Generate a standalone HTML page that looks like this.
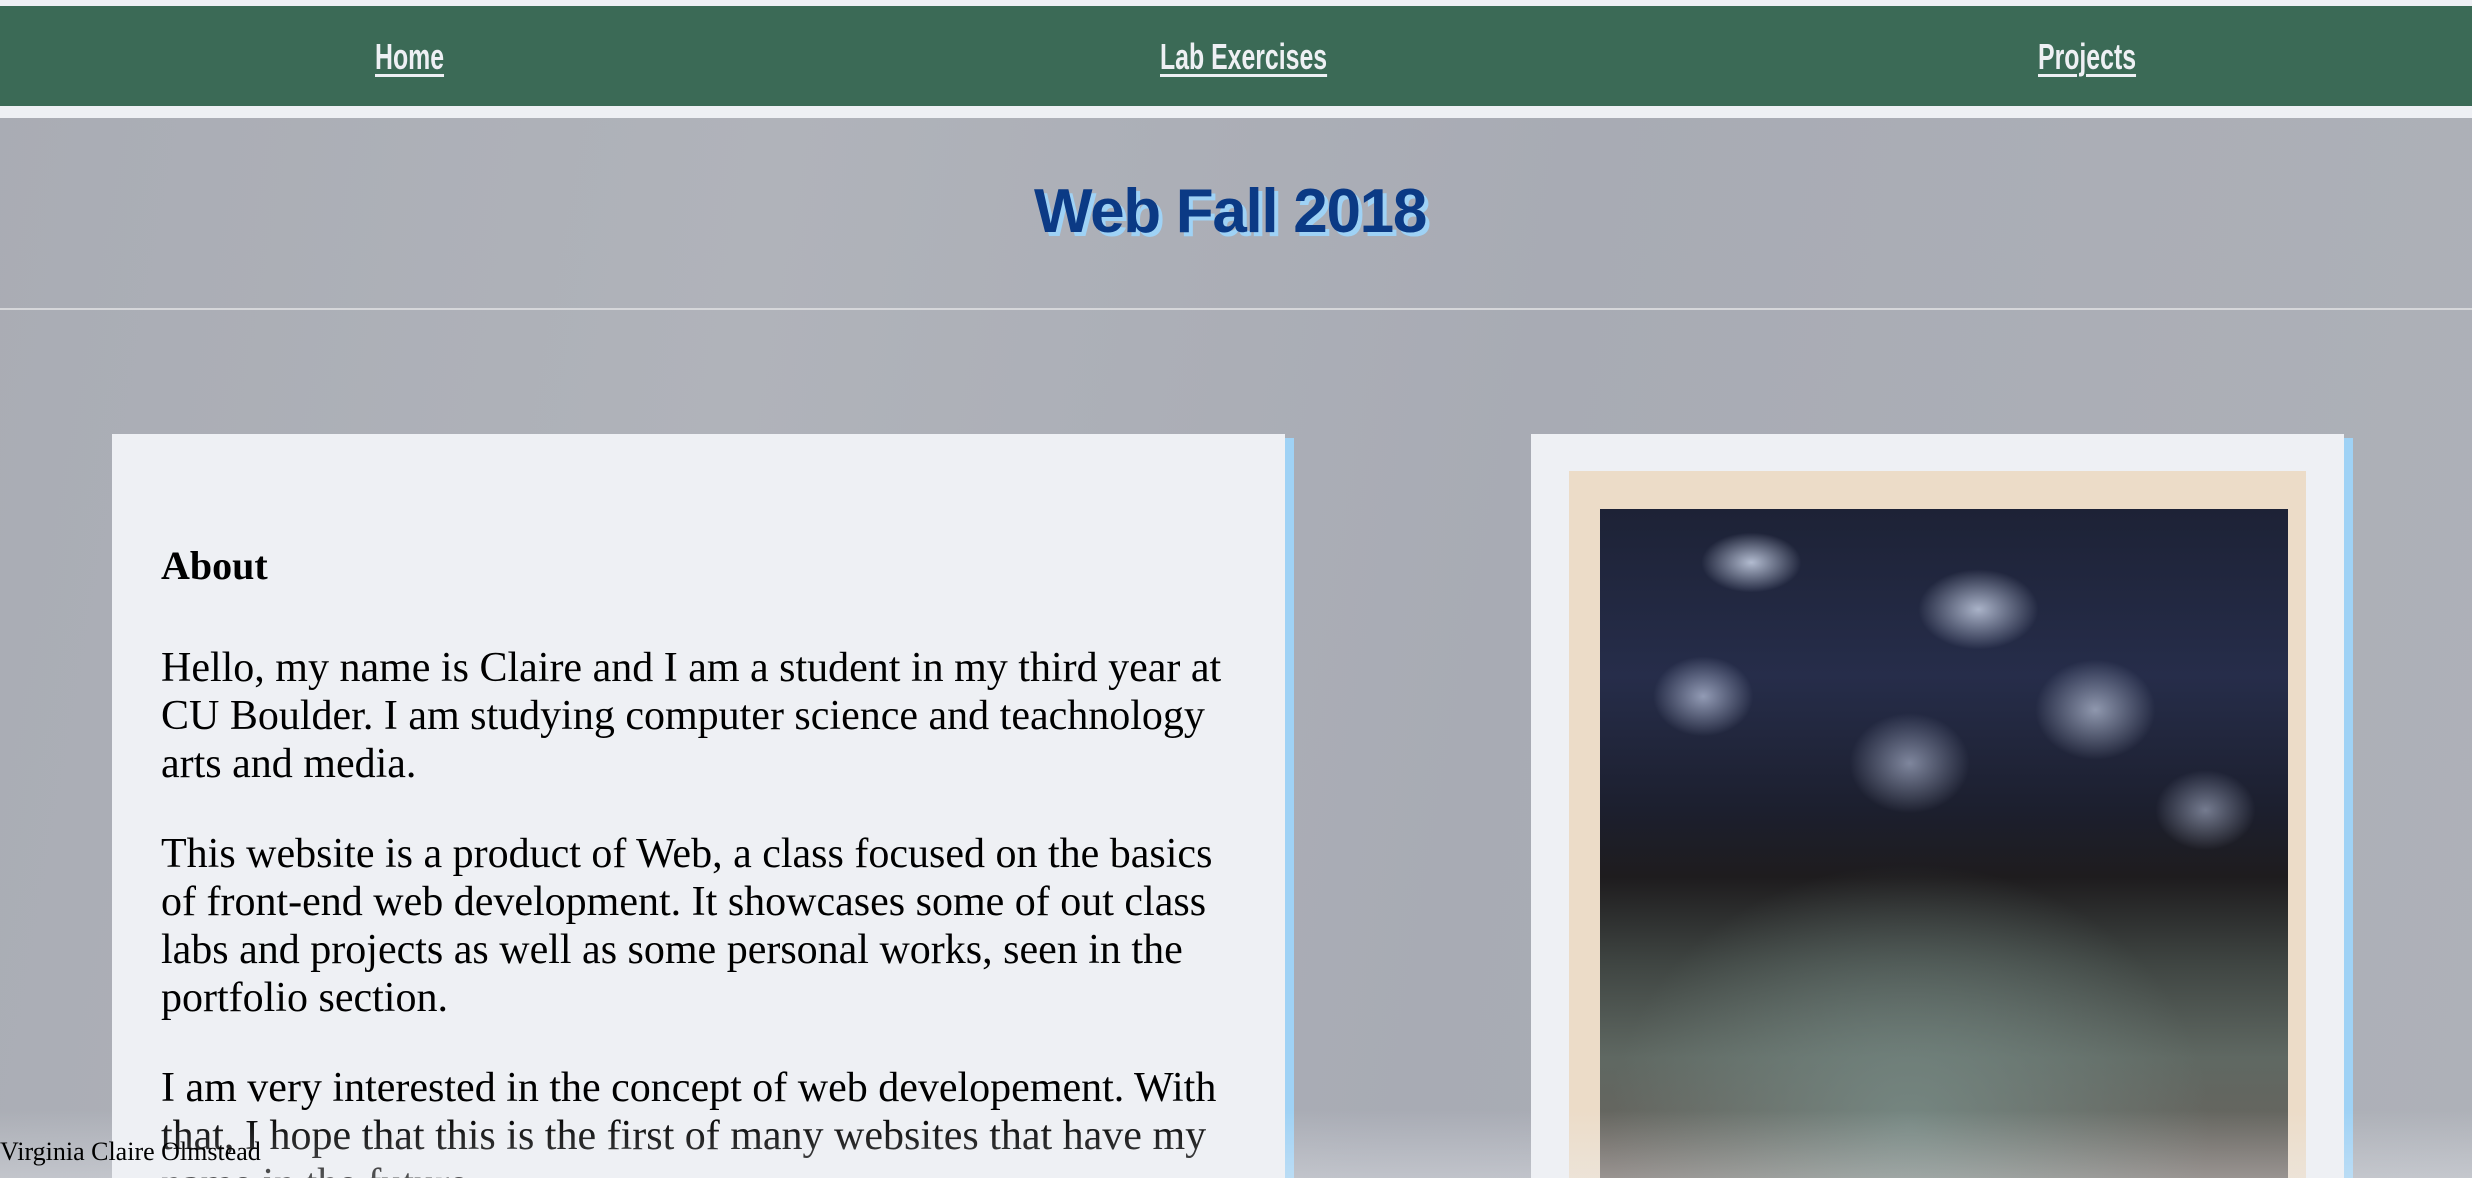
<!DOCTYPE html>
<html><head><meta charset="utf-8">
<style>
html,body{margin:0;padding:0;width:2472px;height:1178px;overflow:hidden;}
body{position:relative;
background:linear-gradient(100deg,#a9acb4 0%,#b0b3ba 30%,#a8abb4 60%,#aeb1b8 100%);
font-family:"Liberation Serif",serif;}
.top{position:absolute;left:0;top:0;width:2472px;height:118px;background:#eef0f4;}
.nav{position:absolute;left:0;top:6px;width:2472px;height:100px;background:#3b6a56;}
.nav a{position:absolute;top:30px;color:#eef0f4;font-family:"Liberation Sans Narrow","Liberation Sans",sans-serif;font-weight:bold;font-size:36px;text-decoration:underline;text-decoration-thickness:3px;text-underline-offset:5px;display:inline-block;transform:scaleX(0.69);transform-origin:left top;white-space:nowrap;}
h1{position:absolute;left:-6px;width:2472px;top:176px;margin:0;text-align:center;font-family:"Liberation Sans",sans-serif;font-weight:bold;font-size:62px;color:#0b3a85;text-shadow:4px 4px 0 #9fd2f5;letter-spacing:-1.3px;}
.hr{position:absolute;left:0;top:308px;width:2472px;height:2px;background:#d6d7da;}
.card{position:absolute;top:434px;height:744px;background:#eef0f4;}
.bar{position:absolute;top:438px;height:740px;width:9px;background:#9fd2f5;}
.txt{position:absolute;left:161px;top:0;width:1072px;color:#000;}
.txt h2{position:absolute;top:108px;margin:0;font-size:40px;font-weight:bold;}
.txt p{position:absolute;margin:0;font-size:42px;line-height:48px;width:1072px;}
.photo{position:absolute;left:1569px;top:471px;width:737px;height:707px;background:#ecdcc8;}
.img{position:absolute;left:1600px;top:509px;width:688px;height:669px;
background:
radial-gradient(ellipse 50px 30px at 22% 8%,rgba(215,225,245,.8),transparent),
radial-gradient(ellipse 60px 40px at 55% 15%,rgba(215,225,245,.75),transparent),
radial-gradient(ellipse 60px 50px at 72% 30%,rgba(215,225,245,.6),transparent),
radial-gradient(ellipse 50px 40px at 15% 28%,rgba(205,215,240,.65),transparent),
radial-gradient(ellipse 60px 50px at 45% 38%,rgba(205,215,240,.55),transparent),
radial-gradient(ellipse 50px 40px at 88% 45%,rgba(205,215,240,.5),transparent),
radial-gradient(ellipse 300px 260px at 45% 92%,rgba(120,140,135,.85),transparent),
linear-gradient(180deg,#1d2236 0%,#262d4a 25%,#1c1f2e 45%,#1e1c1e 55%,#3f4542 68%,#5f6862 82%,#6b625c 100%);}
.fade{position:absolute;left:0;top:1110px;width:2472px;height:68px;background:linear-gradient(180deg,rgba(238,240,244,0),rgba(238,240,244,.35));}
.foot{position:absolute;left:0;top:1137px;font-size:26px;color:#000;}
</style></head><body>
<div class="top"></div>
<div class="nav">
<a style="left:375px">Home</a>
<a style="left:1160px">Lab Exercises</a>
<a style="left:2038px">Projects</a>
</div>
<h1>Web Fall 2018</h1>
<div class="hr"></div>
<div class="card" style="left:112px;width:1173px;"></div>
<div class="bar" style="left:1285px"></div>
<div class="card" style="left:1531px;width:813px;"></div>
<div class="bar" style="left:2344px"></div>
<div class="photo"></div>
<div class="img"></div>
<div style="position:absolute;left:0;top:434px;width:1300px;height:744px;overflow:hidden;">
<div class="txt">
<h2>About</h2>
<p style="top:210px">Hello, my name is Claire and I am a student in my third year at CU Boulder. I am studying computer science and teachnology arts and media.</p>
<p style="top:396px">This website is a product of Web, a class focused on the basics of front-end web development. It showcases some of out class labs and projects as well as some personal works, seen in the portfolio section.</p>
<p style="top:630px">I am very interested in the concept of web developement. With that, I hope that this is the first of many websites that have my name in the future.</p>
</div>
</div>
<div class="fade"></div>
<div class="foot">Virginia Claire Olmstead</div>
</body></html>
